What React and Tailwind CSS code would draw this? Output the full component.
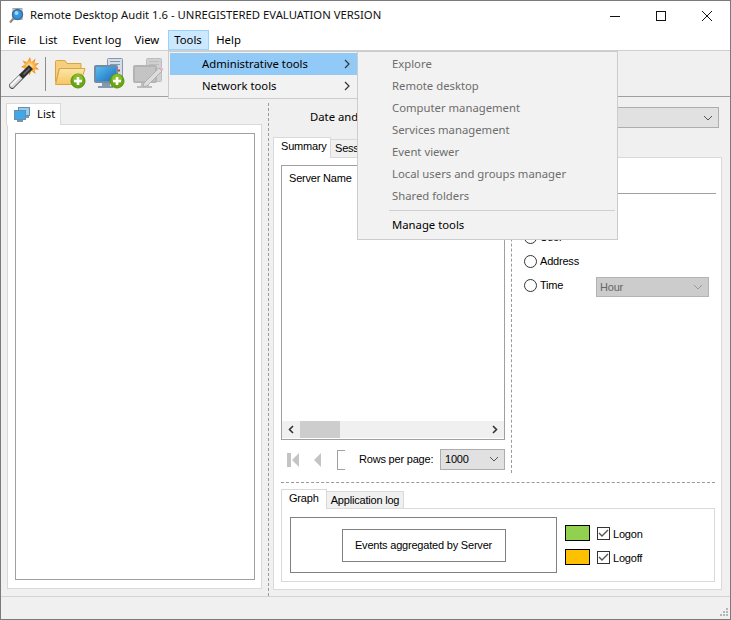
import React from "react";

const ui = { fontFamily: '"Noto Sans", "Open Sans", sans-serif', fontSize: "11.3px" };

function Wand() {
  return (
    <svg width="32" height="34" viewBox="0 0 32 34">
      <defs>
        <radialGradient id="spark">
          <stop offset="0" stopColor="#fff3c0" />
          <stop offset="0.45" stopColor="#fbb64a" />
          <stop offset="1" stopColor="#ee7f14" />
        </radialGradient>
      </defs>
      <path d="M22 0 L23.5 5 L27.5 1.5 L26.5 6.5 L31 6 L27.5 9.5 L31 12.5 L26.5 12.5 L27.5 17 L23.5 14 L21.5 18.5 L20 14 L15.5 16 L17 11.5 L13 10 L17 7.5 L14.5 3.5 L19 5 Z" fill="url(#spark)" />
      <path d="M1 27.5 L21 8 L25 12 L5 32 Q1 32 1 27.5 Z" fill="#2f2f2f" />
      <path d="M1.5 27.5 L11 18 L14.5 21.5 L5 31 Q1.5 31 1.5 27.5 Z" fill="#d9d9d9" />
      <path d="M2.5 28 L11 19.5 L12 20.5 L3.5 29 Z" fill="#ffffff" />
      <path d="M15 17 L21 11 L22 12 L16 18 Z" fill="#6e6e6e" />
    </svg>
  );
}

function Plus({ x = 16, y = 17 }) {
  return (
    <g transform={`translate(${x} ${y})`}>
      <circle cx="7" cy="7" r="7" fill="#6aa516" stroke="#5a9410" />
      <circle cx="7" cy="5" r="5" fill="#86bd28" />
      <path d="M7 3 V11 M3 7 H11" stroke="#fff" strokeWidth="2.6" />
    </g>
  );
}

function FolderPlus() {
  return (
    <svg width="31" height="32" viewBox="0 0 31 32">
      <defs>
        <linearGradient id="fold" x1="0" y1="0" x2="0" y2="1">
          <stop offset="0" stopColor="#fbe6a8" />
          <stop offset="1" stopColor="#f6c763" />
        </linearGradient>
      </defs>
      <path d="M0.5 3.5 Q0.5 2.5 1.5 2.5 H10 L12 5.5 H26 V11 H4 L1 24 H0.5 Z" fill="#f4cf80" stroke="#d9a441" />
      <path d="M4.5 10.5 H30 L25 26.5 H0.5 Z" fill="url(#fold)" stroke="#d9a441" />
      <Plus x={16} y={16} />
    </svg>
  );
}

function PcPlus({ grey }) {
  const body = grey ? "#d0d0d0" : "#d5dde7";
  const edge = grey ? "#bdbdbd" : "#8299ae";
  return (
    <svg width="31" height="32" viewBox="0 0 31 32">
      <defs>
        <linearGradient id="scr" x1="0" y1="0" x2="1" y2="1">
          <stop offset="0" stopColor="#5cc1f2" />
          <stop offset="1" stopColor="#1669b8" />
        </linearGradient>
      </defs>
      <rect x="13.5" y="0.5" width="15" height="23" rx="1" fill={body} stroke={edge} />
      <path d="M16 3.5 H26 M16 6.5 H26" stroke={edge} />
      {!grey && <path d="M21 12.5 h2 M24 12.5 h2" stroke="#d13c3c" strokeWidth="2" />}
      <rect x="1" y="8" width="22" height="16" rx="1" fill={grey ? "#c4c4c4" : "url(#scr)"} stroke={grey ? "#b4b4b4" : "#6f8ba5"} strokeWidth="2" />
      <rect x="8" y="25" width="8" height="3" fill={edge} />
      <rect x="4" y="28" width="15" height="2" fill={edge} />
      {grey ? (
        <g>
          <path d="M10 29 L11 25 L26 10 L29 13 L14 28 Z" fill="#dcdcdc" stroke="#b0b0b0" />
          <path d="M27 9 L30 12" stroke="#e6b8dc" strokeWidth="2" />
        </g>
      ) : (
        <Plus x={16} y={16} />
      )}
    </svg>
  );
}

function Network() {
  return (
    <svg width="16" height="16" viewBox="0 0 16 16">
      <rect x="4.5" y="0.5" width="11" height="8" fill="#8fd0f2" stroke="#6f8ba5" />
      <rect x="0.5" y="3.5" width="11" height="9" fill="#3fa8ea" stroke="#6f8ba5" />
      <rect x="3" y="13" width="6" height="2" fill="#7d93a8" />
      <rect x="12" y="9" width="3" height="2" fill="#7d93a8" />
    </svg>
  );
}

function AppIcon() {
  return (
    <svg width="16" height="16" viewBox="0 0 16 16">
      <rect x="4" y="0.5" width="9" height="11" fill="#d5dde7" stroke="#9aa8b8" />
      <circle cx="8.5" cy="6.5" r="5" fill="#2f96e4" stroke="#4a6a8c" strokeWidth="1.4" />
      <circle cx="7.5" cy="5" r="2" fill="#9ad8fa" />
      <path d="M4.5 10.5 L1 14.5" stroke="#8a8a8a" strokeWidth="2.2" />
    </svg>
  );
}

function Chevron({ color = "#555" }) {
  return (
    <svg width="10" height="6" viewBox="0 0 10 6">
      <path d="M1 1 L5 5 L9 1" fill="none" stroke={color} strokeWidth="1" />
    </svg>
  );
}

function Caret() {
  return (
    <svg width="6" height="10" viewBox="0 0 6 10">
      <path d="M1 1 L5 5 L1 9" fill="none" stroke="#333" strokeWidth="1.2" />
    </svg>
  );
}

function Radio({ label, className = "" }) {
  return (
    <div className={`flex items-center gap-[3px] h-[24px] ${className}`}>
      <span className="w-[13px] h-[13px] rounded-full border border-[#333] bg-white" />
      <span>{label}</span>
    </div>
  );
}

function Check({ label, color }) {
  return (
    <div className="flex items-center h-[16px]">
      <span className={`w-[25px] h-[16px] border border-black ${color}`} />
      <span className="ml-[7px] w-[13px] h-[13px] border border-[#333] bg-white flex items-center justify-center">
        <svg width="11" height="9" viewBox="0 0 11 9">
          <path d="M1 4 L4 7 L10 1" fill="none" stroke="#555" strokeWidth="1.4" />
        </svg>
      </span>
      <span className="ml-[3px] pt-[2px]">{label}</span>
    </div>
  );
}

const subItems = [
  "Explore",
  "Remote desktop",
  "Computer management",
  "Services management",
  "Event viewer",
  "Local users and groups manager",
  "Shared folders",
];

export default function App() {
  return (
    <div
      className="relative w-[731px] h-[620px] overflow-hidden flex flex-col border border-[#7a7a7a] bg-[#f0f0f0] text-black"
      style={ui}
    >
      {/* title bar */}
      <div className="h-[29px] bg-white flex items-center shrink-0">
        <span className="ml-[8px] mr-[5px] flex"><AppIcon /></span>
        <span className="text-[#111]">Remote Desktop Audit 1.6 - UNREGISTERED EVALUATION VERSION</span>
        <div className="ml-auto flex items-center h-full pr-[1px]">
          <div className="w-[46px] flex justify-center">
            <svg width="10" height="10" viewBox="0 0 10 10"><path d="M0 5.5 H10" stroke="#111" /></svg>
          </div>
          <div className="w-[46px] flex justify-center">
            <svg width="10" height="10" viewBox="0 0 10 10"><rect x="0.5" y="0.5" width="9" height="9" fill="none" stroke="#111" /></svg>
          </div>
          <div className="w-[45px] flex justify-center">
            <svg width="10" height="10" viewBox="0 0 10 10"><path d="M0 0 L10 10 M10 0 L0 10" stroke="#111" /></svg>
          </div>
        </div>
      </div>

      {/* menu bar */}
      <div className="h-[21px] bg-white flex items-center shrink-0 pl-[1px] border-b border-[#cfcfcf]">
        <span className="px-[6px]">File</span>
        <span className="px-[6px] ml-[1px]">List</span>
        <span className="px-[6px] ml-[3px]">Event log</span>
        <span className="px-[6px] ml-[1px]">View</span>
        <span className="px-[5px] h-[20px] ml-[3px] w-[41px] flex items-center bg-[#cce8ff] border border-[#99d1ff]">Tools</span>
        <span className="px-[7px]">Help</span>
      </div>

      {/* toolbar */}
      <div className="h-[46px] flex items-center shrink-0 pl-[7px] border-b border-[#a0a0a0]">
        <Wand />
        <span className="w-px h-[34px] bg-[#8c8c8c] ml-[5px] mr-[9px]" />
        <FolderPlus />
        <span className="ml-[8px] flex"><PcPlus /></span>
        <span className="ml-[8px] flex"><PcPlus grey /></span>
      </div>

      {/* main */}
      <div
        className="flex-1 flex min-h-0 pl-[5px] pt-[6px] text-[11px] tracking-[-0.2px]"
        style={{ fontFamily: '"Liberation Sans", sans-serif' }}
      >
        {/* left */}
        <div className="w-[256px] flex flex-col pb-[7px] shrink-0">
          <div
            className="w-[55px] h-[22px] -mb-px relative z-10 bg-white border border-b-0 border-[#d9d9d9] flex items-center pl-[7px] gap-[7px] tracking-normal"
            style={ui}
          >
            <Network />
            <span>List</span>
          </div>
          <div className="flex-1 ml-px bg-white border border-[#d9d9d9] pl-[7px] pr-[6px] py-[8px]">
            <div className="h-full border border-[#a0a0a0]" />
          </div>
        </div>

        {/* right */}
        <div className="flex-1 ml-[6px] border-l border-dashed border-[#9a9a9a] pl-[4px] pr-[8px] flex flex-col pb-[6px]">
          <div className="h-[35px] flex items-start shrink-0 tracking-normal" style={ui}>
            <span className="ml-[37px] mt-[6px]">Date and</span>
            <div className="ml-[40px] mt-[4px] flex-1 mr-[3px] h-[21px] bg-[#e1e1e1] border border-[#adadad] flex items-center justify-end pr-[5px]">
              <Chevron />
            </div>
          </div>
          <div className="flex h-[20px] shrink-0 items-end relative z-10 -mb-px">
            <div className="w-[58px] h-[21px] bg-white border border-b-0 border-[#d9d9d9] flex items-center pl-[7px] pb-[3px]">Summary</div>
            <div className="w-[50px] h-[19px] bg-[#f0f0f0] border border-l-0 border-[#d9d9d9] flex items-center pl-[4px]">Session</div>
          </div>
          <div className="flex-1 min-h-0 bg-white border border-[#d9d9d9] flex flex-col px-[7px]">
            <div className="h-[324px] flex shrink-0">
              <div className="w-[224px] pt-[7px] shrink-0">
                <div className="h-[275px] border border-[#a0a0a0] flex flex-col">
                  <div className="flex-1 pl-[7px] pt-[4px]">Server Name</div>
                  <div className="h-[17px] bg-[#f0f0f0] flex items-center justify-between px-[6px] mb-px relative">
                    <svg width="6" height="9" viewBox="0 0 6 9"><path d="M5 1 L1.5 4.5 L5 8" fill="none" stroke="#333" strokeWidth="1.6" /></svg>
                    <span className="absolute left-[18px] top-0 w-[40px] h-[17px] bg-[#cdcdcd]" />
                    <svg width="6" height="9" viewBox="0 0 6 9"><path d="M1 1 L4.5 4.5 L1 8" fill="none" stroke="#333" strokeWidth="1.6" /></svg>
                  </div>
                </div>
                <div className="flex items-center mt-[9px] h-[21px]">
                  <svg width="13" height="14" viewBox="0 0 13 14" className="ml-[6px]">
                    <rect x="0" y="0" width="4" height="14" fill="#c4c4c4" />
                    <path d="M12 0 V14 L5 7 Z" fill="#c4c4c4" />
                  </svg>
                  <svg width="9" height="14" viewBox="0 0 9 14" className="ml-[13px]">
                    <path d="M8 0 V14 L1 7 Z" fill="#c4c4c4" />
                  </svg>
                  <span className="ml-[15px] w-[8px] h-[20px] border border-r-0 border-[#a0a0a0]" />
                  <span className="ml-[14px] whitespace-nowrap pb-[1px]">Rows per page:</span>
                  <div className="ml-auto w-[65px] h-[21px] -mt-[1px] bg-[#e1e1e1] border border-[#adadad] flex items-center justify-between pl-[4px] pr-[5px]">
                    <span>1000</span>
                    <Chevron />
                  </div>
                </div>
              </div>
              <div className="ml-[6px] h-[315px] border-l border-dashed border-[#9a9a9a] pl-[5px] flex-1">
                <div className="h-[36px] border-b border-[#a0a0a0] mr-[-2px]" />
                <div className="pl-[7px] pt-[31px]">
                  <Radio label="User" />
                  <Radio label="Address" />
                  <div className="flex items-start h-[24px]">
                    <Radio label="Time" className="w-[72px]" />
                    <div className="w-[113px] h-[20px] mt-[4px] bg-[#cccccc] border border-[#b4b4b4] flex items-center justify-between pl-[3px] pr-[5px] text-[#666]">
                      <span>Hour</span>
                      <Chevron color="#999" />
                    </div>
                  </div>
                </div>
              </div>
            </div>

            <div className="border-t border-dashed border-[#9a9a9a] pt-[6px] flex-1 min-h-0 flex flex-col pb-[7px] mr-[-1px]">
              <div className="flex h-[20px] shrink-0 items-end relative z-10 -mb-px">
                <div className="w-[46px] h-[20px] bg-white border border-b-0 border-[#d9d9d9] flex items-center pl-[7px] pb-[2px]">Graph</div>
                <div className="w-[77px] h-[18px] bg-[#f0f0f0] border border-l-0 border-[#d9d9d9] flex items-center justify-center whitespace-nowrap">Application log</div>
              </div>
              <div className="flex-1 border border-[#d9d9d9] bg-white flex items-start px-[8px] pt-[8px]">
                <div className="w-[267px] h-[56px] border border-[#808080] flex items-center justify-center">
                  <div className="w-[164px] h-[33px] border border-[#808080] flex items-center justify-center whitespace-nowrap">
                    Events aggregated by Server
                  </div>
                </div>
                <div className="ml-[8px] mt-[8px] flex flex-col gap-[8px]">
                  <Check label="Logon" color="bg-[#92d050]" />
                  <Check label="Logoff" color="bg-[#ffc000]" />
                </div>
              </div>
            </div>
          </div>
        </div>
      </div>

      {/* status bar */}
      <div className="h-[23px] shrink-0 border-t border-[#d4d4d4] relative">
        <svg width="11" height="11" viewBox="0 0 11 11" className="absolute right-[1px] bottom-[1px]">
          <path d="M8 1h2v2H8zM5 4h2v2H5zM8 4h2v2H8zM2 7h2v2H2zM5 7h2v2H5zM8 7h2v2H8z" fill="#b5b5b5" />
        </svg>
      </div>

      {/* first-level menu */}
      <div className="absolute left-[167px] top-[50px] w-[191px] h-[48px] bg-[#f2f2f2] border border-[#cccccc] p-px z-20">
        <div className="h-[22px] bg-[#91c9f7] flex items-center pl-[32px] pr-[7px] justify-between">
          <span>Administrative tools</span><Caret />
        </div>
        <div className="h-[22px] flex items-center pl-[32px] pr-[7px] justify-between">
          <span>Network tools</span><Caret />
        </div>
      </div>

      {/* second-level menu */}
      <div className="absolute left-[356px] top-[50px] w-[261px] h-[189px] bg-[#f2f2f2] border border-[#cccccc] p-px z-30">
        {subItems.map((t) => (
          <div key={t} className="h-[22px] flex items-center pl-[33px] text-[#6d6d6d]">{t}</div>
        ))}
        <div className="h-[7px] flex items-center ml-[30px] mr-px">
          <div className="w-full h-px bg-[#d0d0d0]" />
        </div>
        <div className="h-[22px] flex items-center pl-[33px]">Manage tools</div>
      </div>
    </div>
  );
}
